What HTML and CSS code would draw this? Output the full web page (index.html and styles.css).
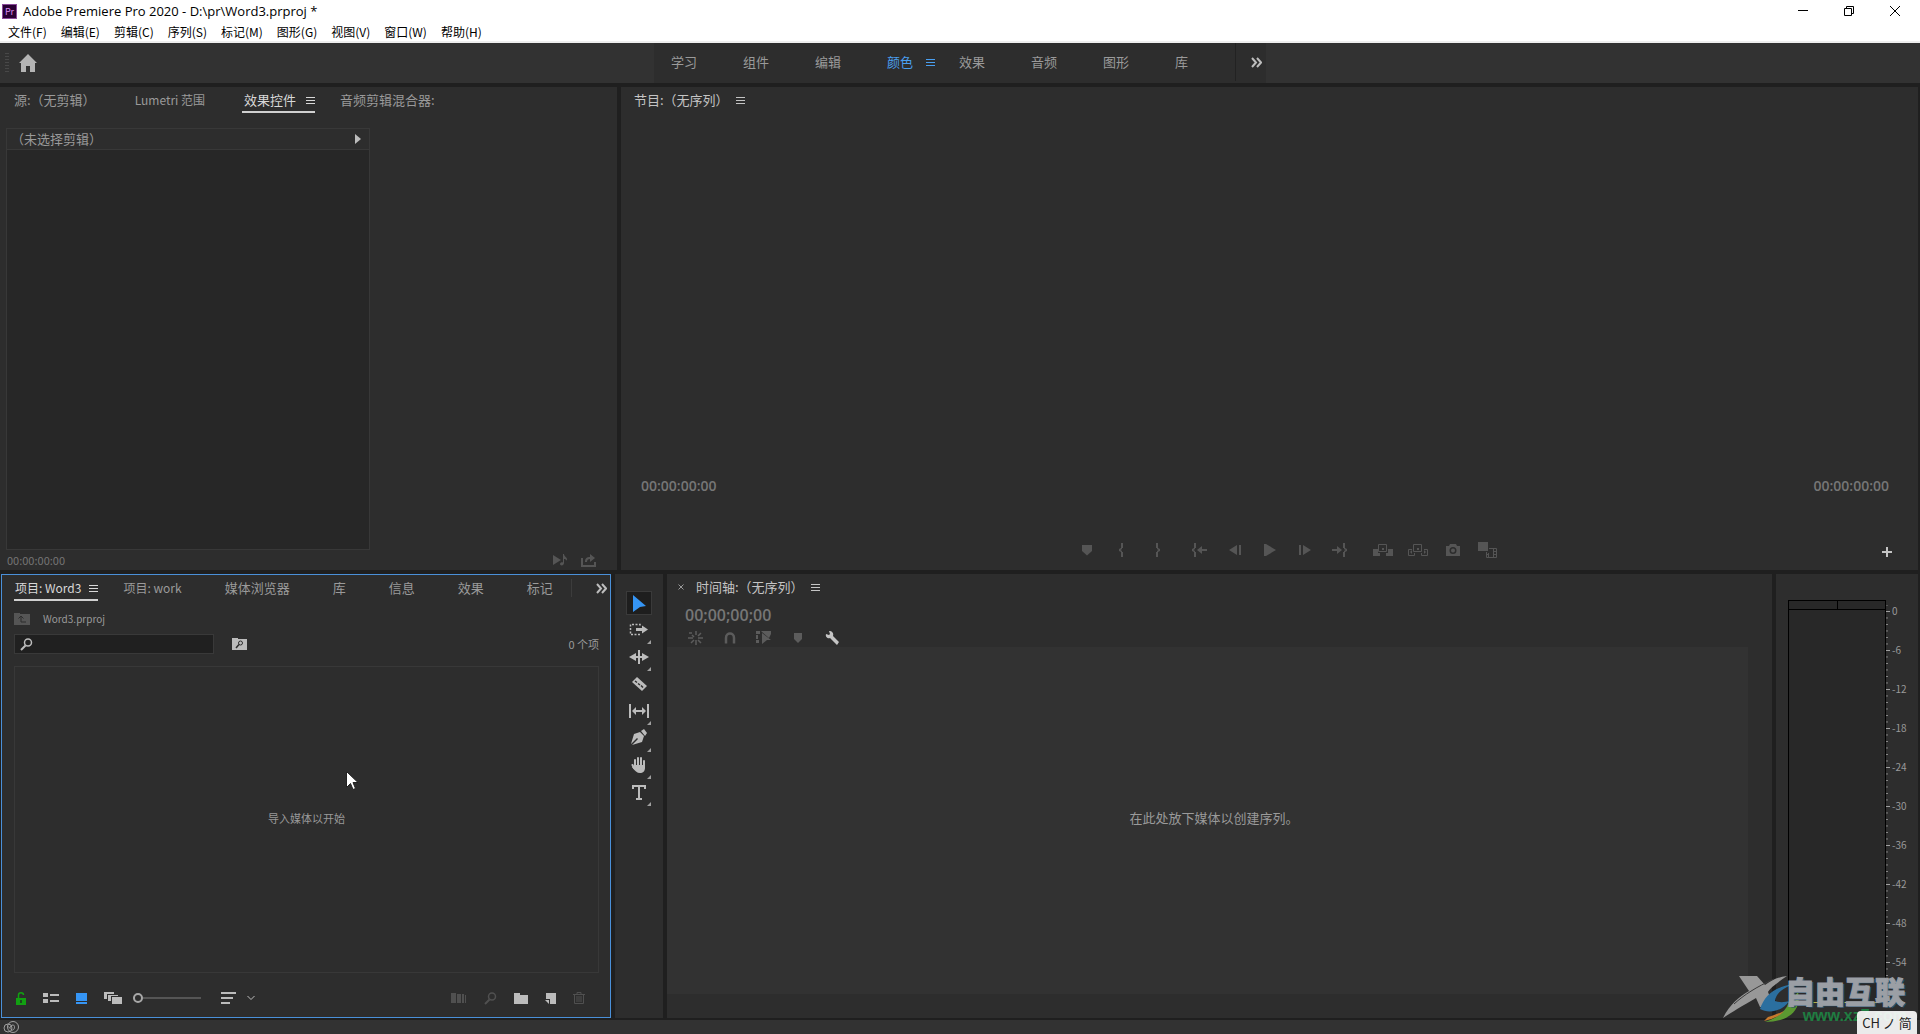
FILE: index.html
```
<!DOCTYPE html>
<html lang="zh-CN">
  <head>
    <meta charset="UTF-8" />
    <meta name="viewport" content="width=device-width, initial-scale=1.0" />
    <title>Adobe Premiere Pro 2020 - D:\pr\Word3.prproj *</title>
    <link rel="stylesheet" href="styles.css">
  </head>
  <body>
    <header class="window-head">
      <div class="title-bar">
        <span class="app-logo">Pr</span>
        <span class="title">Adobe Premiere Pro 2020 - D:\pr\Word3.prproj *</span>
        <div class="window-buttons">
          <button aria-label="最小化"><svg width="12" height="12"><path d="M1 5.500h10" stroke="#000" /></svg></button>
          <button aria-label="还原"><svg width="12" height="12" fill="none" stroke="#000"><path d="M1.500 3.500h7v7h-7zM3.500 3V1.500h7v7H9" /></svg></button>
          <button aria-label="关闭"><svg width="12" height="12" stroke="#000"><path d="M1 1l10 10M11 1L1 11" /></svg></button>
        </div>
      </div>
      <nav class="menu-bar">
        <button>文件(F)</button>
        <button>编辑(E)</button>
        <button>剪辑(C)</button>
        <button>序列(S)</button>
        <button>标记(M)</button>
        <button>图形(G)</button>
        <button>视图(V)</button>
        <button>窗口(W)</button>
        <button>帮助(H)</button>
      </nav>
    </header>

    <div class="workspace-bar">
      <div class="workspace-home">
        <span class="grip"></span>
        <button aria-label="主页"><svg width="20" height="20" viewBox="0 0 20 20" fill="#b4b4b4"><path d="M10 1l9 9h-2v9h-5v-6H8v6H3v-9H1z" /></svg></button>
      </div>
      <nav class="workspaces">
        <button>学习</button>
        <button>组件</button>
        <button>编辑</button>
        <button class="active">颜色<i class="burger"></i></button>
        <button>效果</button>
        <button>音频</button>
        <button>图形</button>
        <button class="last">库</button>
        <button class="more" aria-label="更多工作区"><svg width="11" height="11" fill="none" stroke="#bdbdbd" stroke-width="2"><path d="M1 1l4 4.500L1 10M6 1l4 4.500L6 10" /></svg></button>
      </nav>
    </div>

    <main class="panels">
      <div class="row row-top">
        <section class="panel source">
          <div class="tabs">
            <button>源:（无剪辑）</button>
            <button class="latin">Lumetri 范围</button>
            <button class="active">效果控件<i class="burger"></i></button>
            <button>音频剪辑混合器:</button>
          </div>
          <div class="effect-box">
            <div class="effect-head">
              <span>（未选择剪辑）</span>
              <svg width="6" height="10" fill="#bcbcbc"><path d="M0 0l6 5-6 5z" /></svg>
            </div>
          </div>
          <div class="source-foot">
            <span>00:00:00:00</span>
            <button aria-label="播放音频"><svg width="16" height="12" fill="#555"><path d="M0 1l8 5-8 5zM10 0h1c0 3 4 3 3 7-.300-1.500-2-2-3-2v4c0 3-4 3-4 1 0-1.500 2-2 3-1.500z" /></svg></button>
            <button aria-label="导出帧"><svg width="16" height="13" fill="#555"><path d="M0 4h2v7h11V8h2v5H0zM4 8c0-4 2-5 5-5V0l5 4-5 4V5C7 5 6 6 6 8z" /></svg></button>
          </div>
        </section>

        <section class="panel program">
          <div class="tabs">
            <button class="solo">节目:（无序列）<i class="burger"></i></button>
          </div>
          <div class="monitor"></div>
          <div class="timecodes"><span>00:00:00:00</span><span>00:00:00:00</span></div>
          <div class="transport">
            <div class="group left">
              <button aria-label="添加标记"><svg width="10" height="11" viewBox="0 0 10 11"><path d="M0 0h10v6L5 10.500 0 6z" /></svg></button>
              <button aria-label="标记入点"><svg width="6" height="14" viewBox="0 0 6 14"><path d="M2 0h2v5H3v1L1.500 7 3 8v1h1v5H2V9L0 8V6l2-1z" /></svg></button>
              <button class="wide-gap" aria-label="标记出点"><svg width="6" height="14" viewBox="0 0 6 14"><path d="M4 0H2v5h1v1l1.500 1L3 8v1H2v5h2V9l2-1V6L4 5z" /></svg></button>
              <button aria-label="转到入点"><svg width="15" height="14" viewBox="0 0 15 14"><path d="M2 0h2v5H3v1L1.500 7 3 8v1h1v5H2V9L0 8V6l2-1zM5 7l5-4v3h5v2h-5v3z" /></svg></button>
              <button aria-label="后退一帧"><svg width="12" height="10" viewBox="0 0 12 10"><path d="M0 5l8-5v10zM10 0h2v10h-2z" /></svg></button>
            </div>
            <button aria-label="播放"><svg width="12" height="12" viewBox="0 0 12 12"><path d="M0 0h2l10 6-10 6H0z" /></svg></button>
            <div class="group right">
              <button aria-label="前进一帧"><svg width="12" height="10" viewBox="0 0 12 10"><path d="M12 5L4 0v10zM0 0h2v10H0z" /></svg></button>
              <button class="wide-gap" aria-label="转到出点"><svg width="15" height="14" viewBox="0 0 15 14"><path d="M13 0h-2v5h1v1l1.500 1L12 8v1h-1v5h2V9l2-1V6l-2-1zM10 7L5 3v3H0v2h5v3z" /></svg></button>
              <button aria-label="提升"><svg width="20" height="13" viewBox="0 0 20 13"><path d="M0 5h5v4h2v3H0zM20 5h-5v4h-2v3h7zM9 4h2v2H9z" /><path d="M5.500.500h8v7h-8z" fill="none" stroke="#555" /></svg></button>
              <button aria-label="提取"><svg width="20" height="13" viewBox="0 0 20 13"><path d="M9 4h2v2H9zM2 8l2-2v4zM18 8l-2-2v4z" /><path d="M5.500.500h8v7h-8zM4 5.500H.500v6h6V9M16 5.500h3.500v6h-6V9" fill="none" stroke="#555" /></svg></button>
              <button aria-label="导出帧"><svg width="14" height="12" viewBox="0 0 14 12"><path fill-rule="evenodd" d="M0 2h3l1-2h6l1 2h3v10H0zM7 3a3.500 3.500 0 1 0 0 7 3.500 3.500 0 0 0 0-7zm0 1.500a2 2 0 1 1 0 4 2 2 0 0 1 0-4z" /></svg></button>
              <button aria-label="比较视图"><svg width="19" height="16" viewBox="0 0 19 16"><path d="M0 0h10v9H0z" /><path d="M11 6.500h7.500v9h-10V10M10.500 11v4M15.500 7v8M8 12.500h3M16 9.500h3M16 12.500h3" fill="none" stroke="#555" /></svg></button>
            </div>
            <button class="add-button" aria-label="按钮编辑器"><svg width="10" height="10"><path d="M4 0h2v4h4v2H6v4H4V6H0V4h4z" fill="#c4c4c4" /></svg></button>
          </div>
        </section>
      </div>

      <div class="row row-bottom">
        <section class="panel project">
          <div class="tabs">
            <button class="active latin">项目: Word3<i class="burger"></i></button>
            <button class="latin">项目: work</button>
            <button>媒体浏览器</button>
            <button>库</button>
            <button>信息</button>
            <button>效果</button>
            <button>标记</button>
            <button class="more" aria-label="更多面板"><svg width="11" height="11" fill="none" stroke="#bdbdbd" stroke-width="2"><path d="M1 1l4 4.500L1 10M6 1l4 4.500L6 10" /></svg></button>
          </div>
          <div class="breadcrumb">
            <svg width="17" height="12"><path d="M0 0h6v1h10v11H0z" fill="#555" /><path d="M7 3v6h5M4.500 5.500L7 3l2.500 2.500" fill="none" stroke="#2d2d2d" /></svg>
            <span>Word3.prproj</span>
          </div>
          <div class="search-row">
            <label class="search">
              <svg width="13" height="13" fill="none" stroke="#bcbcbc"><circle cx="8" cy="4.500" r="3.500" stroke-width="1.500" /><path d="M5.500 7.500L1 12" stroke-width="2" /></svg>
              <input type="text" aria-label="搜索" />
            </label>
            <button aria-label="从查询创建新的搜索素材箱"><svg width="15" height="12"><path d="M0 0h6v1h9v11H0z" fill="#bcbcbc" /><circle cx="8.500" cy="5" r="2" fill="none" stroke="#2d2d2d" /><path d="M7 6.500L4 10" stroke="#2d2d2d" stroke-width="1.500" /></svg></button>
            <span class="count">0 个项</span>
          </div>
          <div class="bin">导入媒体以开始</div>
          <div class="project-foot">
            <button aria-label="项目可写"><svg width="10" height="13"><path d="M0 6h10v7H0z" fill="#12a012" /><path d="M2.500 6V3c0-3 5-3 5 0" fill="none" stroke="#12a012" stroke-width="1.500" /><path d="M4 8h2v3H4z" fill="#1d4a1d" /></svg></button>
            <button aria-label="列表视图"><svg width="16" height="12" fill="#bcbcbc"><path d="M0 1h5v4H0zM0 7h5v4H0zM7 2h9v2H7zM7 8h9v2H7z" /></svg></button>
            <button aria-label="图标视图"><svg width="11" height="11" fill="#3595f5"><path d="M0 0h11v8H0zM0 9h11v2H0z" /></svg></button>
            <button aria-label="自由变换视图"><svg width="18" height="12" fill="#bcbcbc"><path d="M0 0h10v2H3v5H0zM4 3h10v1H7v5H4zM8 5h10v7H8z" /></svg></button>
            <input type="range" min="0" max="100" value="0" aria-label="缩放" />
            <button aria-label="排序图标"><svg width="15" height="12" fill="#bcbcbc"><path d="M0 0h15v2H0zM0 5h12v2H0zM0 10h9v2H0z" /></svg></button>
            <button class="chevron" aria-label="排序方式"><svg width="8" height="6"><path d="M.500 1L4 4.500 7.500 1" fill="none" stroke="#bcbcbc" /></svg></button>
            <span class="spacer"></span>
            <button aria-label="自动匹配序列"><svg width="16" height="10" fill="#505050"><path d="M0 0h5v10H0zM6 1h4v9H6zM11 1h2v9h-2zM14 2h1v8h-1z" /></svg></button>
            <button aria-label="查找"><svg width="13" height="13" fill="none" stroke="#505050"><circle cx="8" cy="4.500" r="3.500" stroke-width="1.500" /><path d="M5.500 7.500L1 12" stroke-width="2" /></svg></button>
            <button aria-label="新建素材箱"><svg width="14" height="11"><path d="M0 0h6v2h8v9H0z" fill="#bcbcbc" /></svg></button>
            <button aria-label="新建项"><svg width="11" height="11"><path d="M1 0h10v11H5V6H1zM0 7h4v4z" fill="#bcbcbc" /></svg></button>
            <button aria-label="清除"><svg width="12" height="12" fill="none" stroke="#505050"><path d="M0 2.500h12M4 2V.500h4V2M1.500 3v8.500h9V3M4 4v6M6 4v6M8 4v6" /></svg></button>
          </div>
        </section>

        <section class="panel tools">
          <button class="active" aria-label="选择工具"><svg width="20" height="20"><path d="M4 2l13 11-6 1-7 5z" fill="#3595f5" /></svg></button>
          <button class="sub" aria-label="向前选择轨道工具"><svg width="20" height="20"><path d="M11 5.500V4.500H1.500v10h9.500v-1" fill="none" stroke="#bcbcbc" stroke-dasharray="2 1.500" stroke-width="1.500" /><path d="M7 8h6V5.500l6 4-6 4V11H7z" /></svg></button>
          <button class="sub" aria-label="波纹编辑工具"><svg width="20" height="20"><path d="M9 3h2v14H9zM0 10l7-4v3h2v2H7v3zM20 10l-7-4v3h-2v2h2v3z" /></svg></button>
          <button aria-label="剃刀工具"><svg width="20" height="20"><path d="M3 8l5-5 10 9-5 5z" /><path d="M6 7l2 1.500M9 9.500l2 1.500M12 11.500l2 2" stroke="#2d2d2d" stroke-width="1.500" /></svg></button>
          <button class="sub" aria-label="外滑工具"><svg width="20" height="20"><path d="M0 3h2v14H0zM18 3h2v14h-2zM3 10l4-4v3h6V6l4 4-4 4v-3H7v3z" /></svg></button>
          <button class="sub" aria-label="钢笔工具"><svg width="20" height="20"><path d="M12 3l3-2 3 4-2 3zM11 4l4 4-2 6-10 3 6-6-1-1-6 6 3-10z" /></svg></button>
          <button class="sub" aria-label="手形工具"><svg width="20" height="20"><path d="M6 11V5M9 10V3M12 10V3M15 11V6M5 13L3.500 10" stroke="#bcbcbc" stroke-width="2" stroke-linecap="round" /><path d="M5 10h11v3c0 3-2 5-5 5s-5-2-8-6l2-1z" /></svg></button>
          <button class="sub" aria-label="文字工具"><svg width="20" height="20"><path d="M3 3h14v4h-2V5h-4v11h2v2H7v-2h2V5H5v2H3z" /></svg></button>
        </section>

        <section class="panel timeline">
          <div class="tabs">
            <button class="close" aria-label="关闭"><svg width="6" height="6" stroke="#9a9a9a"><path d="M.500.500l5 5M5.500.500l-5 5" /></svg></button>
            <button class="solo">时间轴:（无序列）<i class="burger"></i></button>
          </div>
          <div class="timeline-code">00;00;00;00</div>
          <div class="timeline-tools">
            <button aria-label="嵌套序列"><svg width="16" height="14" fill="none" stroke="#5c5c5c" stroke-width="1.500"><path d="M8 0v4M8 9v5M1 2h3M0 7h5M10 7h5M3 12l3-3M10 9l3 3M10 5l3-3M4 4l2 2" /></svg></button>
            <button aria-label="对齐"><svg width="12" height="12"><path d="M2 11.500V6c0-6 8-6 8 0v5.500" fill="none" stroke="#5c5c5c" stroke-width="2.500" /></svg></button>
            <button aria-label="链接选择项"><svg width="16" height="14" fill="#5c5c5c"><path d="M0 0h4v3H0zM0 4h2v4H0zM0 9h3v3H0zM5 0h10v3l-2 4zM6 2l9 7h-4l-5 4z" /></svg></button>
            <button aria-label="添加标记"><svg width="8" height="10" fill="#5c5c5c"><path d="M0 0h8v6L4 10 0 6z" /></svg></button>
            <button aria-label="时间轴显示设置"><svg width="14" height="14"><path d="M1 3l3 1 1-1-1-3c3 0 5 2 4 5l6 6-2 3-7-7C3 8 0 6 1 3z" fill="#c4c4c4" /></svg></button>
          </div>
          <div class="timeline-body">
            <div class="drop-area"></div>
            <span>在此处放下媒体以创建序列。</span>
          </div>
        </section>

        <section class="panel meter">
          <div class="meter-box">
            <div class="peaks"><i></i><i></i></div>
          </div>
          <ol class="scale">
            <li>0</li>
            <li>-6</li>
            <li>-12</li>
            <li>-18</li>
            <li>-24</li>
            <li>-30</li>
            <li>-36</li>
            <li>-42</li>
            <li>-48</li>
            <li>-54</li>
          </ol>
        </section>
      </div>
    </main>

    <footer class="status-bar">
      <svg width="18" height="14" fill="none" stroke="#a0a0a0"><circle cx="6" cy="8" r="4" /><circle cx="11" cy="7" r="5.500" /><path d="M5 6c2 0 4 5 6 4s2-5 0-5-3 2-3 3" /></svg>
    </footer>

    <div class="watermark">
      <svg class="swoosh" width="90" height="52" viewBox="0 0 90 52">
        <path d="M17 2h18l8 9C50 6 56 3 65 2 55 9 48 14 46 18l6 15H38l-4-9C20 32 10 38 1 44 8 30 17 23 27 17z" fill="#989898" />
        <path d="M12 30c10-9 22-17 40-25" fill="none" stroke="#3b3b3b" />
        <path d="M38 35c5-14 14-22 34-25-13 5-18 10-19 17 5 2 11 1 14 0-6 10-20 13-29 8z" fill="#2b6f9f" />
        <path d="M76 18c4 17-8 30-33 30 12-4 21-11 23-18z" fill="#5b9831" />
        <path d="M42 47c8-2 15-4 20-10-6 3-12 5-16 6z" fill="#c77a2d" />
      </svg>
      <div class="brand">自由互联</div>
      <div class="site">www.xz7.com</div>
    </div>
    <div class="ime">CH ノ 简</div>
    <svg class="pointer" width="13" height="20" viewBox="0 0 13 20"><path d="M.500.500v16l4-4 2.500 6 2.500-1-2.500-6h5z" fill="#fff" stroke="#222" /></svg>
  </body>
</html>
```
FILE: styles.css
```
* {
  box-sizing: border-box;
}

body {
  margin: 0;
  height: 100vh;
  display: flex;
  flex-direction: column;
  background: #1f1f1f;
  color: #9a9a9a;
  font-family: "Noto Sans CJK SC", sans-serif;
  font-size: 13px;
  line-height: 20px;
  overflow: hidden;
  position: relative;
}

button {
  display: flex;
  align-items: center;
  justify-content: center;
  padding: 0;
  border: none;
  background: none;
  color: inherit;
  font: inherit;
  white-space: nowrap;
}

svg {
  display: block;
  flex: none;
}

/* Window title and menus */
.window-head {
  height: 43px;
  background: #fff;
  border-bottom: 2px solid #eee;
  color: #000;
  font-size: 12px;
}

.title-bar {
  display: flex;
  align-items: center;
  height: 22px;
  padding-left: 2px;
}

.app-logo {
  width: 15px;
  height: 15px;
  margin-right: 6px;
  border: 1px solid #8a4a9a;
  background: #2a0034;
  color: #d98cf0;
  font-size: 9px;
  line-height: 13px;
  text-align: center;
}

.title {
  font-family: "Open Sans", sans-serif;
  font-size: 13px;
}

.window-buttons {
  display: flex;
  margin-left: auto;
  padding-right: 2px;
}

.window-buttons button {
  width: 46px;
  height: 20px;
}

.menu-bar {
  display: flex;
  gap: 14px;
  padding-left: 8px;
}

/* Workspace bar */
.workspace-bar {
  display: grid;
  grid-template-columns: 1fr auto 1fr;
  height: 40px;
  background: #323232;
}

.workspace-home {
  display: flex;
  align-items: center;
  gap: 9px;
  padding-left: 5px;
}

.grip {
  width: 4px;
  height: 20px;
  background: repeating-linear-gradient(#484848 0 1px, transparent 1px 3px);
}

.workspaces {
  display: flex;
  padding: 0 0 2px 17px;
  background: #2d2d2d;
}

.workspaces button {
  width: 72px;
  justify-content: flex-start;
}

.workspaces .last {
  width: 60px;
}

.workspaces .more {
  width: 31px;
  padding-left: 15px;
  border-left: 1px solid #222;
}

.workspaces .active {
  gap: 13px;
  color: #4a9ff0;
}

.burger {
  width: 9px;
  height: 7px;
  background: repeating-linear-gradient(currentColor 0 1px, transparent 1px 3px);
}

/* Panels */
.panels {
  flex: 1;
  display: grid;
  grid-template-rows: 483fr 444fr;
  gap: 4px;
  padding: 4px 2px 2px 0;
  min-height: 0;
}

.row {
  display: grid;
  gap: 4px;
  min-height: 0;
}

.row-top {
  grid-template-columns: 617fr 1297fr;
}

.row-bottom {
  grid-template-columns: 611fr 48px 1105fr 142px;
}

.panel {
  display: flex;
  flex-direction: column;
  background: #2d2d2d;
  min-width: 0;
  min-height: 0;
}

.tabs {
  display: flex;
  gap: 23px;
  height: 26px;
  padding-left: 12px;
}

.tabs button {
  padding: 0 14px 0 2px;
}

.tabs .latin {
  font-size: 12px;
}

.tabs .active {
  gap: 10px;
  padding: 2px 0 0 2px;
  border-bottom: 2px solid #d0d0d0;
  color: #d8d8d8;
}

.tabs .solo {
  gap: 7px;
  padding: 0;
  color: #c4c4c4;
}

.effect-box {
  flex: 1;
  width: 59%;
  margin: 15px 0 0 6px;
  border: 1px solid #383838;
  background: #272727;
}

.effect-head {
  display: flex;
  align-items: center;
  justify-content: space-between;
  height: 21px;
  padding: 0 8px 0 4px;
  border-bottom: 1px solid #383838;
  background: #2d2d2d;
}

.source-foot {
  display: flex;
  align-items: center;
  gap: 12px;
  height: 20px;
  padding: 0 20px 0 7px;
  color: #757575;
  font-size: 11px;
}

.source-foot span {
  flex: 1;
}

.program .tabs {
  padding-left: 13px;
}

.monitor {
  flex: 1;
}

.timecodes {
  display: flex;
  justify-content: space-between;
  padding: 0 29px 0 20px;
  margin-bottom: 35px;
  color: #767676;
  font-family: "Open Sans", sans-serif;
  font-size: 14px;
  font-weight: 600;
}

.transport {
  position: relative;
  display: grid;
  grid-template-columns: 1fr 35px 1fr;
  align-items: center;
  height: 38px;
  margin-bottom: 1px;
  fill: #555;
}

.group {
  display: flex;
}

.group.left {
  justify-content: flex-end;
}

.transport .group button {
  width: 35px;
}

.transport .group .wide-gap {
  margin-right: 8px;
}

.add-button {
  position: absolute;
  right: 26px;
  top: 16px;
}

/* Project panel */
.project {
  margin-left: 1px;
  padding: 0 11px 0 12px;
  border: 1px solid #4a90d9;
}

.project .tabs {
  margin-right: -9px;
  padding-left: 0;
}

.project .tabs button {
  padding-right: 18px;
}

.project .tabs .active {
  gap: 8px;
  padding: 2px 0 0 1px;
}

.project .tabs .more {
  align-self: center;
  height: 18px;
  margin-left: -23px;
  padding: 0 0 0 24px;
  border-left: 1px solid #3c3c3c;
}

.breadcrumb {
  display: flex;
  align-items: center;
  gap: 12px;
  height: 20px;
  margin-top: 8px;
  font-size: 10px;
}

.search-row {
  display: flex;
  align-items: center;
  height: 20px;
  margin-top: 5px;
  font-size: 11px;
}

.search {
  display: flex;
  align-items: center;
  gap: 6px;
  width: 200px;
  height: 20px;
  margin-right: 18px;
  padding-left: 5px;
  border: 1px solid #393939;
  background: #202020;
}

.search input {
  flex: 1;
  min-width: 0;
  border: none;
  outline: none;
  background: none;
  color: #ccc;
  font: inherit;
}

.count {
  margin-left: auto;
}

.bin {
  flex: 1;
  display: flex;
  align-items: center;
  justify-content: center;
  margin-top: 12px;
  padding-bottom: 4px;
  border: 1px solid #383838;
  font-size: 11px;
}

.project-foot {
  display: flex;
  align-items: center;
  gap: 17px;
  height: 44px;
  padding: 6px 14px 0 2px;
}

.project-foot input {
  width: 68px;
  height: 12px;
  margin: 0 3px 0 -6px;
  appearance: none;
  background: linear-gradient(#555, #555) center / 100% 2px no-repeat;
}

.project-foot input::-webkit-slider-thumb {
  appearance: none;
  width: 10px;
  height: 10px;
  border: 2px solid #a8a8a8;
  border-radius: 50%;
  background: #2d2d2d;
}

.chevron {
  margin-left: -6px;
}

.spacer {
  flex: 1;
}

/* Tools */
.tools {
  align-items: center;
  gap: 3px;
  padding-top: 17px;
  fill: #bcbcbc;
}

.tools button {
  width: 26px;
  height: 24px;
  position: relative;
}

.tools .active {
  border: 1px solid #3a3a3a;
  background: #1e1e1e;
}

.tools .sub::after {
  content: "";
  position: absolute;
  right: 1px;
  bottom: -2px;
  border-left: 4px solid transparent;
  border-bottom: 4px solid #a0a0a0;
}

/* Timeline */
.timeline .tabs {
  gap: 12px;
  padding-left: 11px;
}

.timeline .tabs .close {
  padding: 0;
}

.timeline-code {
  padding-left: 18px;
  color: #767676;
  font-family: "Open Sans", sans-serif;
  font-size: 16px;
  font-weight: 600;
  line-height: 30px;
}

.timeline-tools {
  display: flex;
  height: 17px;
  padding: 0 0 2px 12px;
}

.timeline-tools button {
  width: 34px;
}

.timeline-body {
  position: relative;
  flex: 1;
  display: flex;
  align-items: center;
  justify-content: center;
  padding: 0 11px 30px 0;
}

.timeline-body span {
  position: relative;
}

.drop-area {
  position: absolute;
  inset: 0 24px 24px 0;
  background: #323232;
}

/* Audio meter */
.meter {
  flex-direction: row;
  padding: 26px 0 15px 12px;
}

.meter-box {
  width: 98px;
  border: 1px solid #000;
  border-bottom-color: #b5b04a;
  background: #282828;
}

.peaks {
  display: flex;
  height: 9px;
  border-bottom: 1px solid #000;
}

.peaks i {
  flex: 1;
}

.peaks i + i {
  border-left: 1px solid #000;
}

.scale {
  flex: 1;
  display: flex;
  flex-direction: column;
  margin: 0;
  padding: 5px 0 8px;
  list-style: none;
  font-size: 10px;
  line-height: 12px;
}

.scale li {
  flex: 1;
  padding-left: 6px;
  background:
    linear-gradient(#a0a0a0, #a0a0a0) 0 6px / 4px 1px no-repeat,
    linear-gradient(#888 1px, transparent 1px) 0 6px / 2px calc(100% / 6) repeat-y;
}

.status-bar {
  height: 14px;
  padding-left: 2px;
  background: #323232;
}

/* Things floating over the window */
.watermark {
  position: absolute;
  right: 12px;
  bottom: 8px;
  width: 186px;
  height: 52px;
}

.swoosh {
  position: absolute;
  left: 0;
  top: 0;
}

.brand {
  position: absolute;
  right: 3px;
  top: 1px;
  color: #9b9fa5;
  font-size: 30px;
  font-weight: 900;
  line-height: 30px;
  text-shadow: 2px 1px 0 #24506f;
  -webkit-text-stroke: 1px #9b9fa5;
}

.site {
  position: absolute;
  right: 1px;
  top: 33px;
  color: #1f7d41;
  font-family: "Liberation Sans", sans-serif;
  font-size: 16px;
  font-weight: bold;
  line-height: 18px;
}

.ime {
  position: absolute;
  right: 3px;
  bottom: 0;
  width: 60px;
  height: 23px;
  border-radius: 4px 4px 0 0;
  background: rgba(255, 255, 255, 0.9);
  color: #222;
  line-height: 24px;
  text-align: center;
}

.pointer {
  position: absolute;
  left: 18%;
  top: 771px;
}
```
